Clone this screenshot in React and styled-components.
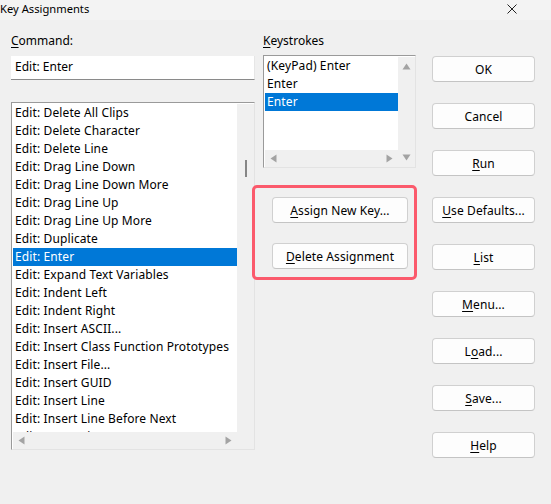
import React from "react";
import styled, { createGlobalStyle } from "styled-components";

const Global = createGlobalStyle`
  html, body { margin: 0; padding: 0; background: #f0f0f0; }
  body { font-family: "Noto Sans", "Liberation Sans", sans-serif; font-size: 12px; color: #000; }
  * { box-sizing: border-box; }
`;

const Window = styled.div`
  width: 551px;
  height: 504px;
  background: #f0f0f0;
  display: flex;
  flex-direction: column;
  overflow: hidden;
`;

const TitleBar = styled.div`
  height: 20px;
  display: flex;
  align-items: center;
  justify-content: space-between;
  padding: 0 34px 2px 0;
  background: #f3f3f3;
  font-size: 11.2px;
  line-height: 16px;
`;

const CloseIcon = styled.svg`
  width: 10px;
  height: 10px;
`;

const Content = styled.div`
  display: flex;
  padding-left: 11px;
  padding-top: 13px;
`;

const Column = styled.div`
  display: flex;
  flex-direction: column;
  flex: none;
  width: ${(p) => p.$w}px;
  margin-left: ${(p) => p.$ml || 0}px;
`;

const Label = styled.div`
  height: 16px;
  line-height: 16px;
  font-size: 12px;
`;

const U = styled.span`
  text-decoration: underline;
  text-underline-offset: 2px;
`;

const Input = styled.div`
  margin-top: 7px;
  height: 24px;
  background: #fff;
  border-bottom: 1px solid #8a8a8a;
  border-right: 1px solid #e6e6e6;
  padding-left: 4px;
  line-height: 22px;
`;

const ListBox = styled.div`
  margin-top: ${(p) => p.$mt}px;
  height: ${(p) => p.$h}px;
  background: #fff;
  border-top: 1px solid #9a9a9a;
  border-left: 1px solid #9a9a9a;
  border-right: 1px solid #e3e3e3;
  border-bottom: 1px solid #e3e3e3;
  display: grid;
  grid-template-columns: 1fr 17px;
  grid-template-rows: 1fr 17px;
  padding: 1px 0 0 1px;
`;

const Rows = styled.div`
  overflow: hidden;
`;

const Row = styled.div`
  height: 18px;
  line-height: 18px;
  padding-left: 2px;
  white-space: nowrap;
  letter-spacing: 0.12px;
  background: ${(p) => (p.$sel ? "#0078d7" : "transparent")};
  color: ${(p) => (p.$sel ? "#fff" : "#000")};
`;

const VScroll = styled.div`
  grid-row: 1 / span 2;
  grid-column: 2;
  background: #f0f0f0;
  display: flex;
  flex-direction: column;
  align-items: center;
  justify-content: ${(p) => (p.$arrows ? "space-between" : "flex-start")};
  padding: ${(p) => (p.$arrows ? "5px 0 5px" : "56px 0 0 1px")};
`;

const Thumb = styled.div`
  width: 2px;
  height: 17px;
  background: #868686;
`;

const HScroll = styled.div`
  grid-row: 2;
  grid-column: 1;
  background: #f0f0f0;
  display: flex;
  align-items: center;
  justify-content: space-between;
  padding: 0 4px;
`;

const Arrow = styled.svg`
  width: 9px;
  height: 9px;
  fill: #a3a3a3;
`;

const Btn = styled.div`
  width: ${(p) => p.$w || 103}px;
  height: 26px;
  margin-top: ${(p) => p.$mt || 0}px;
  background: #fdfdfd;
  border: 1px solid #d0d0d0;
  border-bottom-color: #c4c4c4;
  border-radius: 4px;
  display: flex;
  align-items: center;
  justify-content: center;
  font-size: 12px;
  letter-spacing: 0.1px;
`;

const Highlight = styled.div`
  margin-top: 17px;
  margin-left: -11px;
  width: 165px;
  height: 95px;
  border: 3px solid #fb5a6c;
  border-radius: 5px;
  padding: 9px 0 0 17px;
  display: flex;
  flex-direction: column;
  gap: 20px;
`;

const commands = [
  "Edit: Delete All Clips",
  "Edit: Delete Character",
  "Edit: Delete Line",
  "Edit: Drag Line Down",
  "Edit: Drag Line Down More",
  "Edit: Drag Line Up",
  "Edit: Drag Line Up More",
  "Edit: Duplicate",
  "Edit: Enter",
  "Edit: Expand Text Variables",
  "Edit: Indent Left",
  "Edit: Indent Right",
  "Edit: Insert ASCII...",
  "Edit: Insert Class Function Prototypes",
  "Edit: Insert File...",
  "Edit: Insert GUID",
  "Edit: Insert Line",
  "Edit: Insert Line Before Next",
  "Edit: Insert Line Comment",
];

const Up = () => (
  <Arrow viewBox="0 0 9 9"><path d="M4.5 1.5 L8.5 7.5 L0.5 7.5 Z" /></Arrow>
);
const Down = () => (
  <Arrow viewBox="0 0 9 9"><path d="M0.5 1.5 L8.5 1.5 L4.5 7.5 Z" /></Arrow>
);
const Left = () => (
  <Arrow viewBox="0 0 9 9"><path d="M1.5 4.5 L7.5 0.5 L7.5 8.5 Z" /></Arrow>
);
const Right = () => (
  <Arrow viewBox="0 0 9 9"><path d="M1.5 0.5 L7.5 4.5 L1.5 8.5 Z" /></Arrow>
);

const rightButtons = [
  [null, "OK"],
  [null, "Cancel"],
  ["R", "un"],
  ["U", "se Defaults..."],
  ["L", "ist"],
  ["M", "enu..."],
  ["L", "o", "ad..."],
  ["S", "ave..."],
  ["H", "elp"],
];

export default function App() {
  return (
    <Window>
      <Global />
      <TitleBar>
        <span>Key Assignments</span>
        <CloseIcon viewBox="0 0 10 10">
          <path d="M0.5 0.5 L9.5 9.5 M9.5 0.5 L0.5 9.5" stroke="#222" strokeWidth="1" />
        </CloseIcon>
      </TitleBar>
      <Content>
        <Column $w={244}>
          <Label><U>C</U>ommand:</Label>
          <Input>Edit: Enter</Input>
          <ListBox $mt={22} $h={348}>
            <Rows>
              {commands.map((c) => (
                <Row key={c} $sel={c === "Edit: Enter"}>{c}</Row>
              ))}
            </Rows>
            <VScroll>
              <Thumb />
            </VScroll>
            <HScroll>
              <Left />
              <Right />
            </HScroll>
          </ListBox>
        </Column>
        <Column $w={153} $ml={8}>
          <Label><U>K</U>eystrokes</Label>
          <ListBox $mt={6} $h={113}>
            <Rows>
              <Row>(KeyPad) Enter</Row>
              <Row>Enter</Row>
              <Row $sel>Enter</Row>
            </Rows>
            <VScroll $arrows>
              <Up />
              <Down />
            </VScroll>
            <HScroll>
              <Left />
              <Right />
            </HScroll>
          </ListBox>
          <Highlight>
            <Btn $w={136}><U>A</U>ssign New Key...</Btn>
            <Btn $w={136}><U>D</U>elete Assignment</Btn>
          </Highlight>
        </Column>
        <Column $w={103} $ml={16}>
          {rightButtons.map((b, i) => (
            <Btn key={i} $mt={i === 0 ? 23 : 21}>
              {b.length === 2 ? (
                b[0] ? (<><U>{b[0]}</U>{b[1]}</>) : b[1]
              ) : (
                <>{b[0]}<U>{b[1]}</U>{b[2]}</>
              )}
            </Btn>
          ))}
        </Column>
      </Content>
    </Window>
  );
}
